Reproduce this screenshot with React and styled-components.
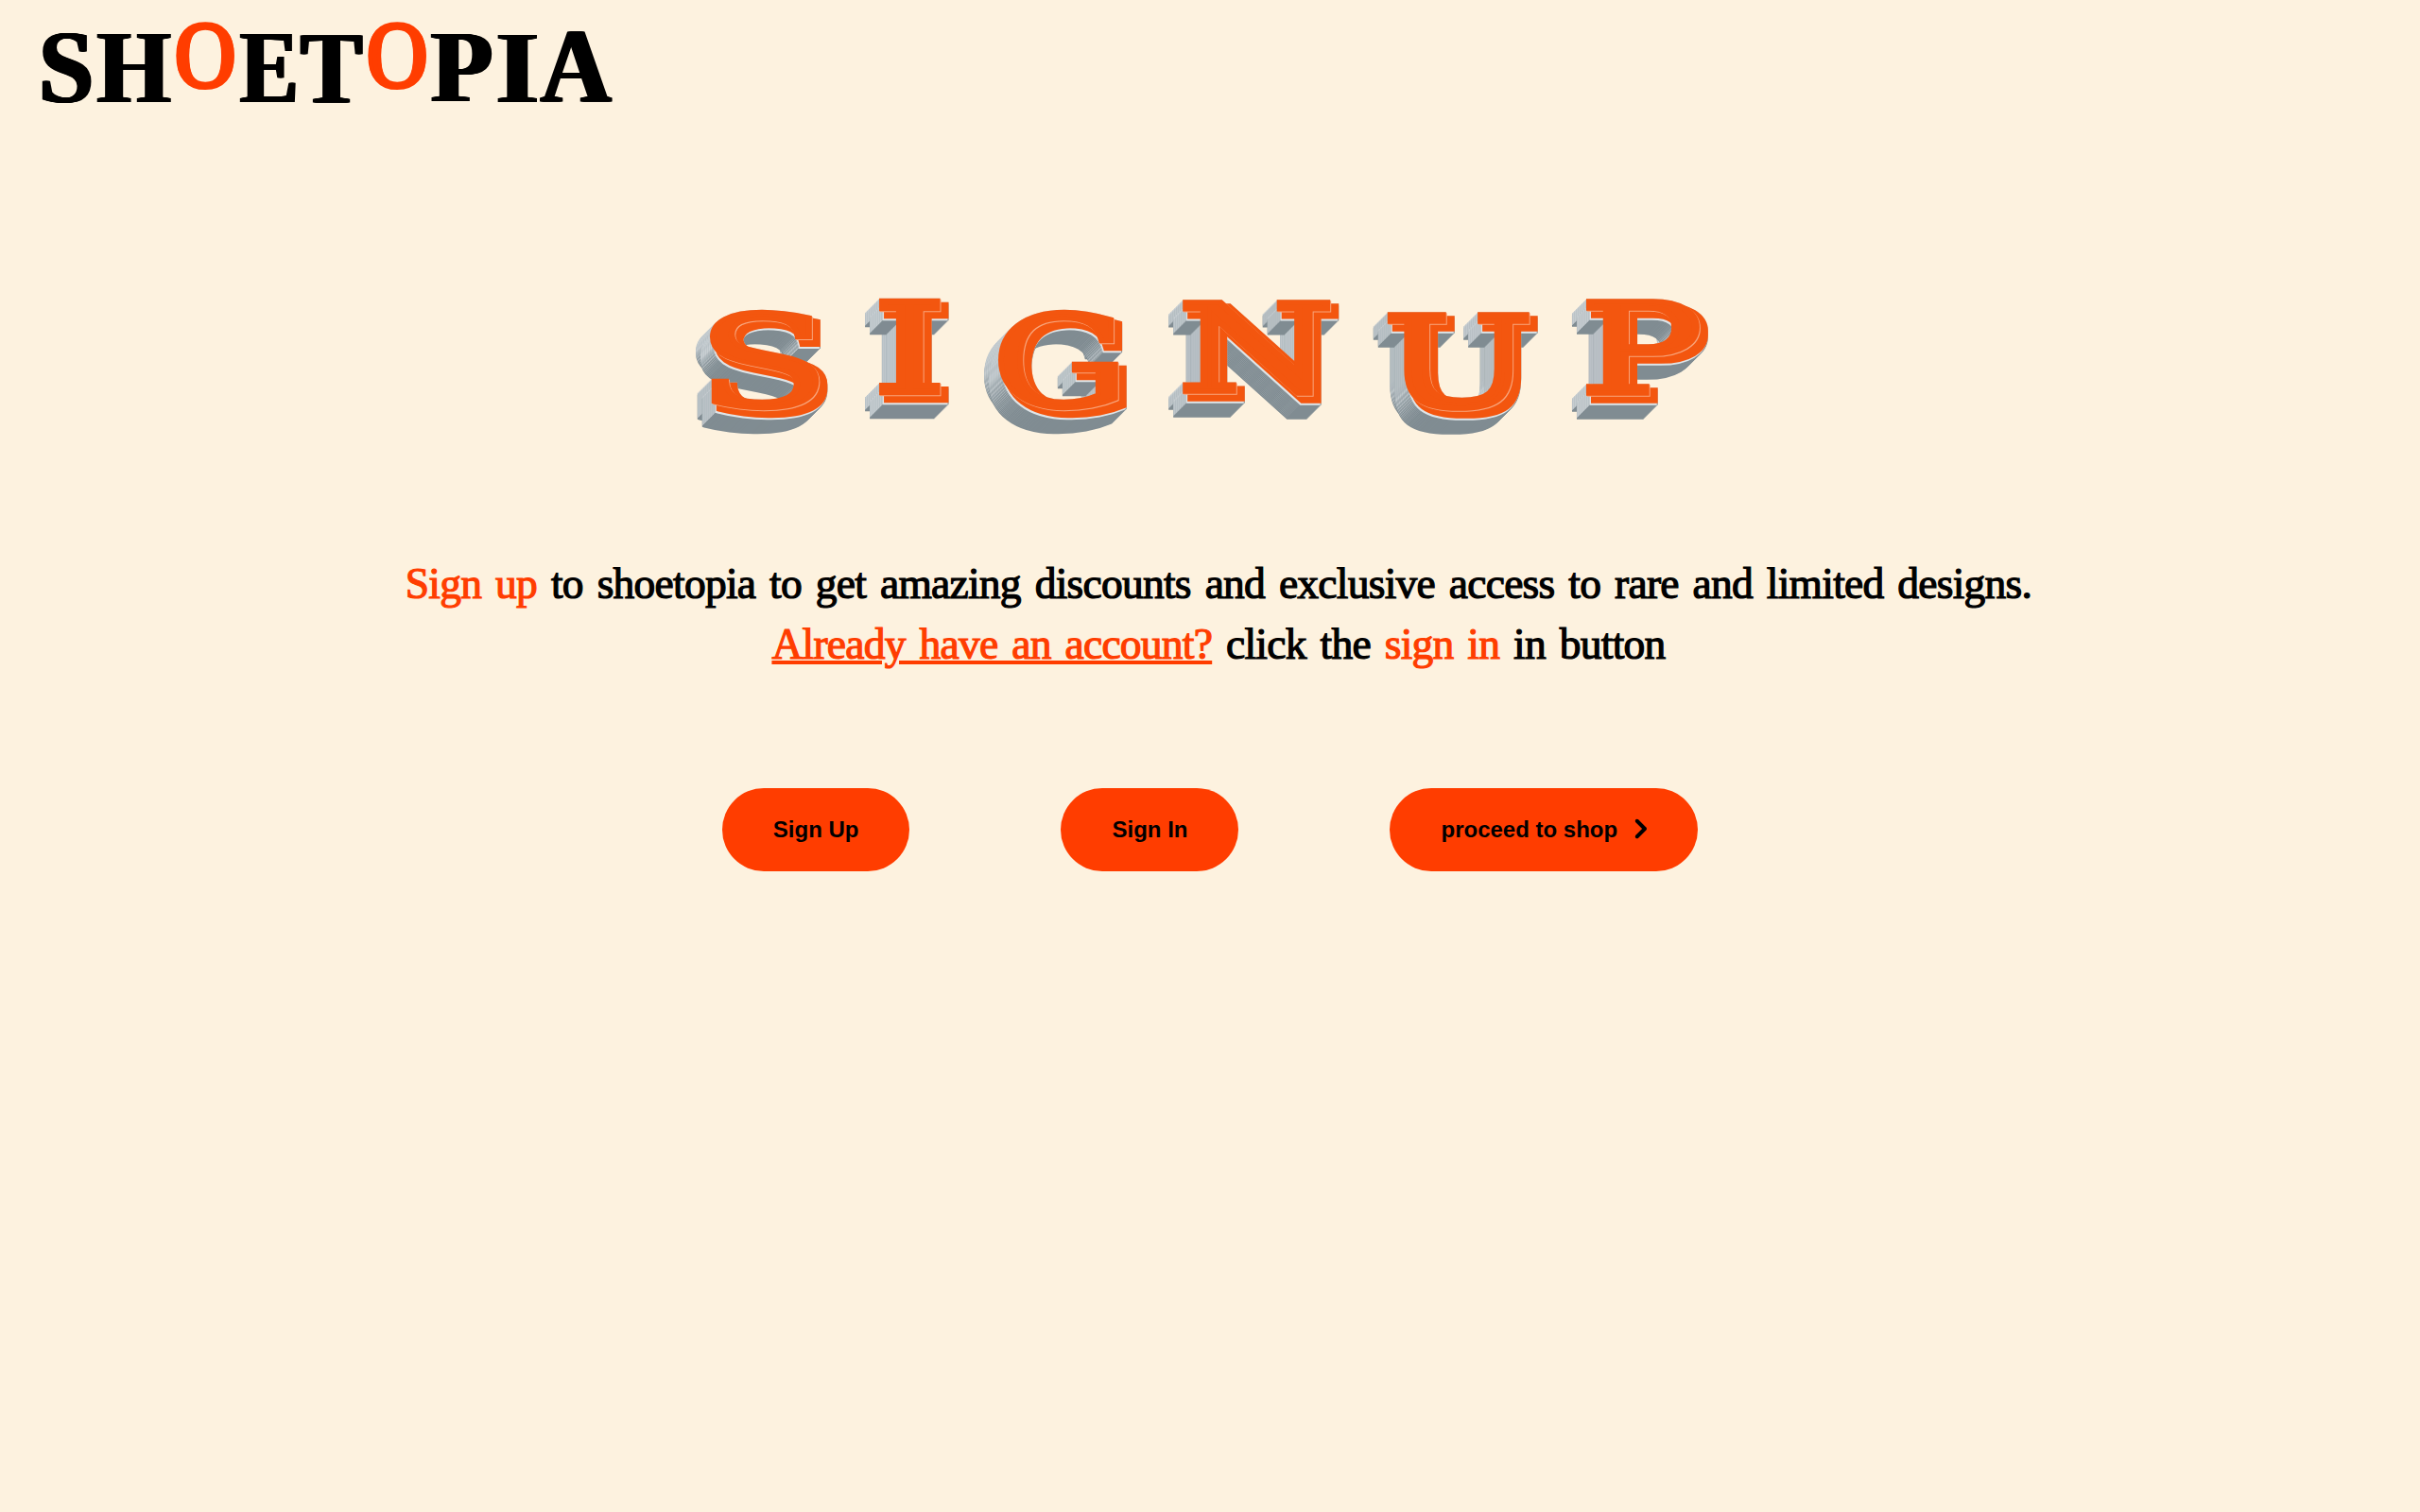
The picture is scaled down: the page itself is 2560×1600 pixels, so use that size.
import React from "react";
import styled, { createGlobalStyle, css } from "styled-components";
import { FaChevronRight } from "react-icons/fa6";

const ACCENT = "#ff3d00";
const POSTER = "#f3560f";

const GlobalStyle = createGlobalStyle`
  * { box-sizing: border-box; }
  body { margin: 0; background: #fdf2df; color: #000; }
`;

const Page = styled.div`
  min-height: 1600px;
  display: flex;
  flex-direction: column;
`;

/* ---------- letters stretched to a given ink size ---------- */

const pen = document.createElement("canvas").getContext("2d");

/* padX / padY: how much an outline adds to the ink, in unscaled pixels */
function fit(char, font, size, width, height, padX = 0, padY = 0) {
  pen.font = font;
  const m = pen.measureText(char);
  const left = m.actualBoundingBoxLeft + padX / 2;
  const right = m.actualBoundingBoxRight + padX / 2;
  const top = m.actualBoundingBoxAscent + padY / 2;
  const bottom = m.actualBoundingBoxDescent + padY / 2;
  const sx = width / (left + right);
  const sy = height / (top + bottom);
  const baseline =
    (size + m.fontBoundingBoxAscent - m.fontBoundingBoxDescent) / 2;
  const tx = sx * left;
  const ty = -sy * (baseline - top);
  return `matrix(${sx}, 0, 0, ${sy}, ${tx}, ${ty})`;
}

const Slot = styled.span`
  display: block;
  flex: none;
  width: ${(p) => p.$w}px;
  height: ${(p) => p.$h}px;
  margin-left: ${(p) => p.$gap || 0}px;
  margin-top: ${(p) => p.$drop || 0}px;
`;

const Glyph = styled.span`
  display: block;
  width: max-content;
  white-space: pre;
  transform-origin: 0 0;
  line-height: 1;
`;

/* ---------- logo ---------- */

const Logo = styled.header`
  display: flex;
  align-items: flex-start;
  height: 140px;
  padding: 21px 0 0 44px;
`;

const LogoGlyph = styled(Glyph)`
  font-family: "Liberation Serif", serif;
  font-size: 110px;
  ${(p) =>
    p.$round
      ? css`
          font-weight: 400;
          color: ${ACCENT};
          -webkit-text-stroke: 5px ${ACCENT};
          text-shadow: -3px 0 ${ACCENT}, 3px 0 ${ACCENT};
        `
      : css`
          font-weight: 700;
          color: #000;
          text-shadow: -2px 0 #000, -1px 0 #000, 1px 0 #000, 2px 0 #000;
        `}
`;

const LOGO = [
  { c: "S", w: 53, h: 74, drop: 14, gap: 0 },
  { c: "H", w: 79, h: 72, drop: 15, gap: 5 },
  { c: "O", w: 62, h: 72, drop: 1, gap: 5, round: true },
  { c: "E", w: 60, h: 72, drop: 15, gap: 5 },
  { c: "T", w: 67, h: 72, drop: 15, gap: 4 },
  { c: "O", w: 62, h: 72, drop: 1, gap: 5, round: true },
  { c: "P", w: 66, h: 72, drop: 15, gap: 4 },
  { c: "I", w: 43, h: 72, drop: 15, gap: 5 },
  { c: "A", w: 77, h: 74, drop: 13, gap: 2 },
];

function LogoLetter({ c, w, h, drop, gap, round }) {
  const font = `${round ? 400 : 700} 110px "Liberation Serif"`;
  const transform = fit(c, font, 110, w, h, round ? 6 : 4, round ? 5 : 0);
  return (
    <Slot $w={w} $h={h} $drop={drop} $gap={gap}>
      <LogoGlyph $round={round} style={{ transform }}>
        {c}
      </LogoGlyph>
    </Slot>
  );
}

/* ---------- extruded heading ---------- */

const Heading = styled.h1`
  display: flex;
  align-items: flex-start;
  height: 262px;
  margin: 0;
  padding: 176px 0 0 750px;
`;

const Defs = styled.svg`
  position: absolute;
  width: 0;
  height: 0;
`;

const over = (top, bottom, result) => (
  <feMerge key={result} result={result}>
    <feMergeNode in={bottom} />
    <feMergeNode in={top} />
  </feMerge>
);

/* Sweeps a silhouette down-left: lit left sides, shaded undersides. */
function sweep(shape) {
  const n = (s) => `${shape}-${s}`;
  const out = [
    <feOffset key={n("d")} in={shape} dx="0" dy="2" result={n("d")} />,
    <feComposite key={n("dc")} in="dark" in2={n("d")} operator="in" result={n("dc")} />,
    <feComposite key={n("l1")} in="light" in2={shape} operator="in" result={n("l1")} />,
    <feComposite key={n("l2")} in="mid" in2={shape} operator="in" result={n("l2")} />,
    over(n("l1"), n("dc"), n("u")),
    over(n("l2"), n("dc"), n("v")),
    <feOffset key={n("vo")} in={n("v")} dx="-1" dy="1" result={n("vo")} />,
    over(n("u"), n("vo"), n("s1")),
  ];
  let last = n("s1");
  [2, 4, 8].forEach((d) => {
    out.push(
      <feOffset key={n(`o${d}`)} in={last} dx={-d} dy={d} result={n(`o${d}`)} />,
      over(last, n(`o${d}`), n(`s${d}`))
    );
    last = n(`s${d}`);
  });
  return out;
}

function BlockFilter() {
  return (
    <Defs aria-hidden="true">
      <filter
        id="block"
        x="-40"
        y="-20"
        width="260"
        height="200"
        filterUnits="userSpaceOnUse"
        colorInterpolationFilters="sRGB"
      >
        <feFlood floodColor="#808c92" result="dark" />
        <feFlood floodColor="#c9cfd3" result="light" />
        <feFlood floodColor="#bdc6ca" result="mid" />
        <feFlood floodColor="#dfe5e8" result="rimColor" />
        <feFlood floodColor="#f8a57c" result="edgeColor" />
        <feFlood floodColor={POSTER} result="poster" />

        <feOffset in="SourceAlpha" dx="0" dy="0" result="face" />
        <feMorphology in="face" operator="dilate" radius="2" result="wide" />
        <feOffset in="wide" dx="7" dy="6" result="back" />

        {sweep("face")}
        {sweep("back")}

        <feOffset in="back" dx="-1" dy="2" result="rimShape" />
        <feComposite in="rimColor" in2="rimShape" operator="in" result="rim" />
        <feComposite in="poster" in2="back" operator="in" result="backFill" />
        <feOffset in="face" dx="1" dy="1" result="edgeShape" />
        <feComposite in="edgeColor" in2="edgeShape" operator="in" result="edge" />

        <feMerge>
          <feMergeNode in="face-s8" />
          <feMergeNode in="back-s8" />
          <feMergeNode in="rim" />
          <feMergeNode in="backFill" />
          <feMergeNode in="edge" />
          <feMergeNode in="SourceGraphic" />
        </feMerge>
      </filter>
    </Defs>
  );
}

const BlockSlot = styled(Slot)`
  filter: url(#block);
`;

const PosterGlyph = styled(Glyph)`
  font-family: "DejaVu Serif", serif;
  font-size: 140px;
  font-weight: 400;
  color: ${POSTER};
  -webkit-text-stroke: ${(p) => p.$line}px ${POSTER};
`;

const POSTER_LETTERS = [
  { c: "S", w: 117, h: 108, drop: 11, gap: 0, line: 4.5 },
  { c: "I", w: 66, h: 103, drop: 0, gap: 62, line: 7 },
  { c: "G", w: 128, h: 108, drop: 11, gap: 60, line: 4.5 },
  { c: "N", w: 158, h: 103, drop: 0, gap: 66.5, line: 6 },
  { c: "U", w: 151, h: 105, drop: 14, gap: 59.5, line: 6 },
  { c: "P", w: 122, h: 103, drop: 0, gap: 59, line: 6 },
];

function PosterLetter({ c, w, h, drop, gap, line }) {
  const font = '400 140px "DejaVu Serif"';
  const transform = fit(c, font, 140, w, h, line, line);
  return (
    <BlockSlot $w={w} $h={h} $drop={drop} $gap={gap}>
      <PosterGlyph $line={line} style={{ transform }}>
        {c}
      </PosterGlyph>
    </BlockSlot>
  );
}

/* ---------- copy and buttons ---------- */

const Copy = styled.p`
  height: 128px;
  margin: 184px 0 0;
  padding-left: 18px;
  text-align: center;
  font-family: "Liberation Serif", serif;
  font-size: 45.5px;
  line-height: 64px;
  letter-spacing: -0.75px;
  word-spacing: 4.2px;
  -webkit-text-stroke: 1.2px currentColor;
`;

const Accent = styled.span`
  color: ${ACCENT};
`;

const AccountLink = styled.a`
  color: ${ACCENT};
  text-decoration: underline;
  text-decoration-thickness: 4px;
  text-underline-offset: 2px;
`;

const Actions = styled.div`
  display: flex;
  justify-content: center;
  gap: 160px;
  margin-top: 120px;
`;

const Button = styled.button`
  display: flex;
  align-items: center;
  gap: 16px;
  height: 88px;
  padding: 0 54px;
  border: 0;
  border-radius: 44px;
  background: ${ACCENT};
  color: #000;
  font: 700 24px/28px "Liberation Sans", Arial, sans-serif;
  white-space: nowrap;
`;

const Chevron = styled(FaChevronRight)`
  width: 15px;
  height: 22px;
  margin-bottom: 2px;
  overflow: visible;
  stroke: #000;
  stroke-width: 28px;
`;

export default function App() {
  return (
    <Page>
      <GlobalStyle />
      <BlockFilter />
      <Logo>
        {LOGO.map((l, i) => (
          <LogoLetter key={i} {...l} />
        ))}
      </Logo>
      <Heading>
        {POSTER_LETTERS.map((l) => (
          <PosterLetter key={l.c} {...l} />
        ))}
      </Heading>
      <Copy>
        <Accent>Sign up</Accent> to shoetopia to get amazing discounts and
        exclusive access to rare and limited designs.
        <br />
        <AccountLink>Already have an account?</AccountLink> click the{" "}
        <Accent>sign in</Accent> in button
      </Copy>
      <Actions>
        <Button>Sign Up</Button>
        <Button>Sign In</Button>
        <Button>
          proceed to shop
          <Chevron />
        </Button>
      </Actions>
    </Page>
  );
}
